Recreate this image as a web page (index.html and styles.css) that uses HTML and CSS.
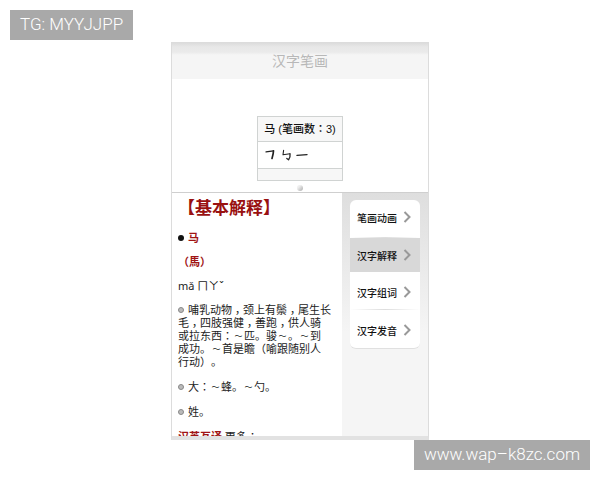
FILE: index.html
```html
<!DOCTYPE html>
<html lang="zh-CN">
<head>
<meta charset="utf-8">
<title>汉字笔画</title>
<link rel="stylesheet" href="styles.css">
</head>
<body>
<main class="card">
  <header class="bar"><h1>汉字笔画</h1></header>
  <section class="strokes">
    <table>
      <thead><tr><th>马 (笔画数<span class="mid" lang="zh-TW">：</span>3)</th></tr></thead>
      <tbody>
        <tr><td class="draw">
          <svg width="46" height="16" viewBox="0 0 46 16" role="img" aria-label="笔顺">
            <g fill="none" stroke="#222" stroke-linecap="round" stroke-linejoin="round">
              <path d="M2 4.8L9.5 3.8" stroke-width="1.2"/>
              <path d="M9.5 3.8Q9.4 7 8 11.5" stroke-width="1.7"/>
              <path d="M19.6 3.2L19 7.8L26 6.8" stroke-width="1.1"/>
              <path d="M26 6.8Q26.6 10.6 24.6 12.8L22.8 11.4" stroke-width="1.3"/>
              <path d="M33 8.4L43 7.6" stroke-width="1.4"/>
            </g>
          </svg>
        </td></tr>
        <tr><td class="empty"></td></tr>
      </tbody>
    </table>
    <span class="knob"></span>
  </section>
  <div class="body">
    <article class="text">
      <h2>【基本解释】</h2>
      <p><span class="dot"></span><b class="red">马</b></p>
      <p><b class="red mid" lang="zh-TW">（馬）</b></p>
      <p>mǎ ㄇㄚˇ</p>
      <p class="def"><span class="ring"></span>哺乳动物<span class="mid low" lang="zh-TW">，</span>颈上有鬃<span class="mid low" lang="zh-TW">，</span>尾生长<br>毛<span class="mid low" lang="zh-TW">，</span>四肢强健<span class="mid low" lang="zh-TW">，</span>善跑<span class="mid low" lang="zh-TW">，</span>供人骑<br>或拉东西<span class="mid" lang="zh-TW">：</span><span class="tilde">～</span>匹。骏<span class="tilde">～</span>。<span class="tilde">～</span>到<br>成功。<span class="tilde">～</span>首是瞻<span class="mid" lang="zh-TW">（</span>喻跟随别人<br>行动<span class="mid" lang="zh-TW">）</span>。</p>
      <p class="def"><span class="ring"></span>大<span class="mid" lang="zh-TW">：</span><span class="tilde">～</span>蜂。<span class="tilde">～</span>勺。</p>
      <p class="def"><span class="ring"></span>姓。</p>
      <p><b class="red">汉英互译</b> 更多<span class="mid" lang="zh-TW">：</span></p>
    </article>
    <aside class="side">
      <nav class="menu">
        <a href="#draw">笔画动画<svg class="chev" width="8" height="12" viewBox="0 0 8 12"><path d="M1.5 1L6.5 6L1.5 11"/></svg></a>
        <a href="#explain" class="on">汉字解释<svg class="chev" width="8" height="12" viewBox="0 0 8 12"><path d="M1.5 1L6.5 6L1.5 11"/></svg></a>
        <a href="#words">汉字组词<svg class="chev" width="8" height="12" viewBox="0 0 8 12"><path d="M1.5 1L6.5 6L1.5 11"/></svg></a>
        <a href="#sound">汉字发音<svg class="chev" width="8" height="12" viewBox="0 0 8 12"><path d="M1.5 1L6.5 6L1.5 11"/></svg></a>
      </nav>
    </aside>
  </div>
</main>
<div class="tag top">TG: MYYJJPP</div>
<div class="tag bottom">www.wap–k8zc.com</div>
</body>
</html>
```
FILE: styles.css
```css
* { box-sizing: border-box; }
body {
  margin: 0;
  min-height: 100vh;
  padding: 42px 16px 40px;
  display: flex;
  background: #fff;
  color: #222;
  font: 11px/13px "Noto Sans", "Noto Sans CJK SC", sans-serif;
  text-spacing-trim: space-all;
}
.card {
  width: 43%;
  min-width: 258px;
  margin: 0 auto;
  display: flex;
  flex-direction: column;
  border: 1px solid #dcdcdc;
  border-bottom: 4px solid #e2e2e2;
  height: calc(100vh - 82px);
}
.bar {
  padding: 8px 0;
  background: linear-gradient(#dcdcdc 0, #e8e8e8 4px, #eaeaea 9px, #f5f5f5 12px);
}
h1 {
  margin: 0;
  font-size: 14px;
  line-height: 20px;
  font-weight: 400;
  text-align: center;
  color: #b8b8b8;
}
.strokes {
  padding-top: 37px;
  display: flex;
  flex-direction: column;
  align-items: center;
}
table { border-collapse: collapse; }
th, td { border: 1px solid #d0d3d2; padding: 0 6px; }
th {
  height: 25px;
  background: #f7f7f7;
  font-weight: 500;
  font-family: "Liberation Sans", "Noto Sans CJK SC", sans-serif;
  color: #111;
}
.draw { height: 27px; }
.draw svg { display: block; }
.empty { height: 12px; background: #f7f7f7; }
.knob {
  width: 6px;
  height: 6px;
  margin: 4px 0 1px;
  border-radius: 3px;
  background: linear-gradient(135deg, #eee 30%, #aaa);
}
.body {
  flex: 1;
  min-height: 0;
  display: flex;
  border-top: 1px solid #cfcfcf;
}
.text {
  flex: 1;
  overflow: hidden;
  padding: 5px 0 0 6px;
  white-space: nowrap;
}
h2 {
  margin: 0 0 13px;
  font-size: 17px;
  line-height: 20px;
  font-weight: 700;
  color: #911;
}
p { margin: 0 0 11px; }
.def { margin-bottom: 12px; }
.red { color: #a01414; }
.mid { font-family: "Noto Sans CJK TC", sans-serif; }
.low { vertical-align: -3px; line-height: 0; }
.tilde {
  display: inline-block;
  width: 11px;
  font-size: 8px;
  line-height: 0;
  text-align: center;
  vertical-align: 1px;
}
.dot, .ring {
  display: inline-block;
  width: 6px;
  height: 6px;
  margin-right: 4px;
  border-radius: 50%;
  vertical-align: 1px;
}
.dot { background: #111; }
.ring { border: 1px solid #888; background: #bbb; }
.side {
  flex: none;
  width: 86px;
  padding: 7px 8px 0;
  background: linear-gradient(#dedede, #f5f5f5 140px);
}
.menu {
  border-radius: 6px;
  overflow: hidden;
  background: #fff;
  border-bottom: 1px solid #e0e0e0;
}
.menu a {
  display: flex;
  align-items: center;
  justify-content: space-between;
  height: 38px;
  padding: 0 9px 4px 7px;
  font-size: 10px;
  font-weight: 500;
  font-family: "Noto Sans CJK SC", sans-serif;
  color: #111;
  text-decoration: none;
  background: linear-gradient(90deg, #fff, #ddd, #fff) bottom / 100% 1px no-repeat;
}
.menu .on { height: 34px; padding-bottom: 0; background: #d8d8d8; }
.menu .on ~ a { height: 38px; padding-top: 2px; padding-bottom: 0; }
.menu a:last-child { background: none; }
.chev { fill: none; stroke: #999; stroke-width: 2; }
.tag {
  position: absolute;
  height: 30px;
  padding: 0 10px;
  background: #a9a9a9;
  color: #fff;
  font: 300 17px/28px Roboto, "Liberation Sans", sans-serif;
}
.top { left: 10px; top: 10px; }
.bottom { right: 10px; bottom: 10px; }
```
